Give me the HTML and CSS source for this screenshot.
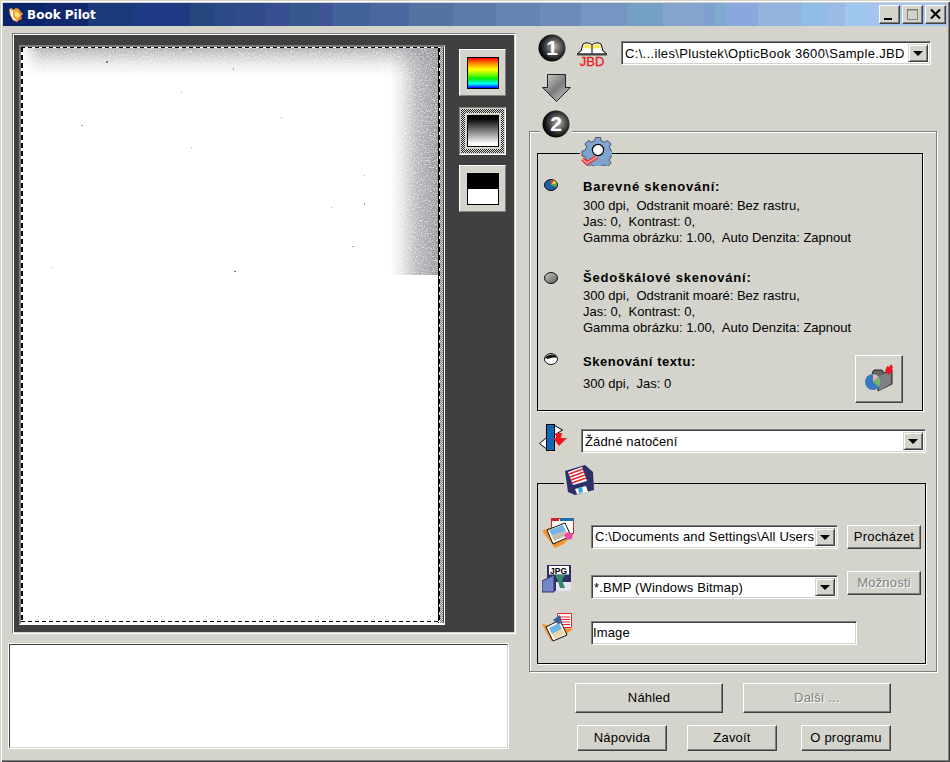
FILE: index.html
```html
<!DOCTYPE html>
<html lang="cs">
<head>
<meta charset="utf-8">
<title>Book Pilot</title>
<link rel="stylesheet" href="styles.css">
</head>
<body>
<div class="window">
  <header class="titlebar">
    <svg class="app-icon" width="18" height="18" viewBox="0 0 18 18"><path d="M2 3l3-1 1 2 3-2 3 1 2 3 2 2-2 2 1 3-3 1-2 2-3-1-2-3-2-3z" fill="#f4a33c"/><path d="M3 4l3 1 0 6 3 3-3 0-2-4z" fill="#fff"/><path d="M8 6l3 0 2 3-2 3-3-2z" fill="#ffe27a"/><path d="M11 4l3 3-1 1zM12 12l3-1-2 3z" fill="#e8551e"/></svg>
    <span class="app-title">Book Pilot</span>
    <div class="caption-btns">
      <button class="caption-btn"><svg width="19" height="17" viewBox="0 0 19 17"><rect x="4" y="12" width="8" height="2" fill="#000"/></svg></button>
      <button class="caption-btn"><svg width="19" height="17" viewBox="0 0 19 17"><path d="M4.5 3.5h10v10h-10z" fill="none" stroke="#808080"/><path d="M4 3h11v1.6H4z" fill="#808080"/></svg></button>
      <button class="caption-btn"><svg width="19" height="17" viewBox="0 0 19 17"><path d="M5 3.5l9 9M14 3.5l-9 9" stroke="#000" stroke-width="2"/></svg></button>
    </div>
  </header>

  <main class="main">
    <section class="left">
      <div class="preview">
        <div class="frame">
          <div class="scan">
            <svg class="scan-shade" width="417" height="228" viewBox="0 0 417 228">
              <defs>
                <linearGradient id="fadeTop" x1="0" y1="0" x2="0" y2="1"><stop offset="0" stop-color="#999" stop-opacity=".8"/><stop offset=".25" stop-color="#999" stop-opacity=".5"/><stop offset=".6" stop-color="#999" stop-opacity=".18"/><stop offset="1" stop-color="#999" stop-opacity="0"/></linearGradient>
                <linearGradient id="fadeRight" x1="0" y1="0" x2="1" y2="0"><stop offset="0" stop-color="#999" stop-opacity="0"/><stop offset=".25" stop-color="#999" stop-opacity=".22"/><stop offset=".55" stop-color="#999" stop-opacity=".65"/><stop offset="1" stop-color="#999" stop-opacity=".95"/></linearGradient>
                <linearGradient id="fadeLeft" x1="0" y1="0" x2="1" y2="0"><stop offset="0" stop-color="#fff"/><stop offset="1" stop-color="#fff" stop-opacity="0"/></linearGradient>
                <filter id="grain" x="0" y="0" width="100%" height="100%" color-interpolation-filters="sRGB">
                  <feTurbulence type="fractalNoise" baseFrequency=".75" numOctaves="2" seed="4" result="t"/>
                  <feColorMatrix in="t" type="matrix" values="0 0 0 0 .58  0 0 0 0 .58  0 0 0 0 .6  1.3 1.3 0 0 -.4" result="g"/>
                  <feComposite in="g" in2="SourceGraphic" operator="in"/>
                </filter>
              </defs>
              <g filter="url(#grain)">
                <rect width="417" height="30" fill="url(#fadeTop)"/>
                <rect x="369" width="48" height="228" fill="url(#fadeRight)"/>
              </g>
              <rect width="20" height="30" fill="url(#fadeLeft)"/>
              <g fill="#aaa">
                <rect x="85" y="14" width="2" height="2" fill="#777"/><rect x="213" y="224" width="2" height="1" fill="#777"/><rect x="160" y="45" width="1" height="1"/><rect x="212" y="21" width="1" height="2"/>
                <rect x="331" y="199" width="2" height="1"/><rect x="343" y="156" width="1" height="2"/><rect x="310" y="160" width="1" height="1"/><rect x="60" y="78" width="2" height="1"/>
                <rect x="30" y="220" width="1" height="1"/><rect x="343" y="128" width="1" height="1"/><rect x="260" y="70" width="1" height="1"/><rect x="170" y="100" width="1" height="1"/>
              </g>
            </svg>
            <div class="selection"></div>
          </div>
          <div class="checker"></div>
        </div>
        <div class="thumbs">
          <button class="thumb"><span class="swatch swatch-color"></span></button>
          <button class="thumb thumb-active"><span class="swatch swatch-gray"></span></button>
          <button class="thumb"><span class="swatch swatch-bw"></span></button>
        </div>
      </div>
      <div class="notes"></div>
    </section>

    <section class="right">
      <div class="step-one">
        <svg class="badge-circle" width="28" height="28" viewBox="0 0 28 28"><defs><radialGradient id="ball1" cx=".58" cy=".45" r=".58"><stop offset="0" stop-color="#b8b8b8"/><stop offset=".45" stop-color="#5a5a5a"/><stop offset=".85" stop-color="#111"/><stop offset="1" stop-color="#000"/></radialGradient></defs><circle cx="14" cy="14" r="13.5" fill="url(#ball1)"/></svg>
        <span class="step-num step-num-one">1</span>
        <div class="book">
          <svg width="32" height="14" viewBox="0 0 32 14"><path d="M1 12l4-3 2-7c4-2 7-1 9 1 2-2 5-3 9-1l2 7 4 3z" fill="#fff" stroke="#000"/><path d="M8 3c3-1 6-1 7 1l0 3c-2-1-5-1-8-1zM17 4c1-2 4-2 7-1l1 3c-3 0-6 0-8 1z" fill="#ffe65c"/><path d="M16 3v9" stroke="#000"/><path d="M1 12.5h30" stroke="#444" stroke-width="2"/></svg>
          <span class="book-label">JBD</span>
        </div>
        <div class="combo combo-path">
          <span class="combo-text">C:\...iles\Plustek\OpticBook 3600\Sample.JBD</span>
          <span class="combo-btn"><i class="tri"></i></span>
        </div>
      </div>

      <svg class="flow-arrow" width="29" height="28" viewBox="0 0 29 28"><defs><linearGradient id="arr" x1="0" y1="0" x2="1" y2="1"><stop offset="0" stop-color="#d8d8d8"/><stop offset=".5" stop-color="#7c7c7c"/><stop offset="1" stop-color="#d8d8d8"/></linearGradient></defs><path d="M5.500.5h18v13h5l-14 14-14-14h5z" fill="url(#arr)" stroke="#222"/></svg>

      <div class="settings">
        <div class="step-two">
          <svg width="28" height="28" viewBox="0 0 28 28"><defs><radialGradient id="ball2" cx=".58" cy=".45" r=".58"><stop offset="0" stop-color="#b8b8b8"/><stop offset=".45" stop-color="#5a5a5a"/><stop offset=".85" stop-color="#111"/><stop offset="1" stop-color="#000"/></radialGradient></defs><circle cx="14" cy="14" r="13.5" fill="url(#ball2)"/></svg>
          <span class="step-num">2</span>
        </div>

        <div class="group group-modes">
          <svg class="legend legend-gear" width="32" height="30" viewBox="0 0 32 30">
            <g transform="translate(18 14)" fill="#7fa5cf" stroke="#2d3a4c" stroke-width=".8">
              <path d="M-2.500-12.500h5l.8 3.300 3.400 1.400 2.900-1.800 3.500 3.500-1.800 2.900 1.400 3.400 3.300.8v5l-3.300.8-1.400 3.400 1.800 2.900-3.500 3.500-2.900-1.800-3.400 1.400-.8 3.300h-5l-.8-3.300-3.400-1.400-2.900 1.800-3.500-3.500 1.800-2.900-1.400-3.400-3.300-.8v-5l3.300-.8 1.400-3.400-1.800-2.900 3.500-3.500 2.900 1.800 3.400-1.400z"/>
              <circle r="5.600" fill="#fff" stroke="#000" stroke-width="1.200"/>
            </g>
            <path d="M2.500 23l4.500 4 10-6" fill="none" stroke="#e83030" stroke-width="4"/>
            <path d="M2.500 23l4.500 4 10-6" fill="none" stroke="#ff9a9a" stroke-width="1.500"/>
          </svg>

          <div class="mode mode-first">
            <svg class="bullet" width="14" height="12" viewBox="0 0 14 12"><ellipse cx="7" cy="6" rx="6.500" ry="5.500" fill="#1f5fa8" stroke="#111"/><path d="M7 6l-1-5 4 .3z" fill="#d8402c"/><path d="M7 6l3-4.700 3 3z" fill="#f4d22c"/><path d="M7 6l6-1.500-.5 3.500z" fill="#5cb848"/></svg>
            <div class="mode-body">
              <h3 class="mode-title">Barevné skenování:</h3>
              <p class="mode-line">300 dpi,&nbsp; Odstranit moaré: Bez rastru,</p>
              <p class="mode-line">Jas: 0,&nbsp; Kontrast: 0,</p>
              <p class="mode-line">Gamma obrázku: 1.00,&nbsp; Auto Denzita: Zapnout</p>
            </div>
          </div>
          <div class="mode mode-second">
            <svg class="bullet" width="14" height="12" viewBox="0 0 14 12"><defs><linearGradient id="bul" x1="0" y1="0" x2="1" y2="1"><stop offset="0" stop-color="#c8c8c8"/><stop offset="1" stop-color="#5c5c5c"/></linearGradient></defs><ellipse cx="7" cy="6" rx="6.500" ry="5.500" fill="url(#bul)" stroke="#111"/></svg>
            <div class="mode-body">
              <h3 class="mode-title">Šedoškálové skenování:</h3>
              <p class="mode-line">300 dpi,&nbsp; Odstranit moaré: Bez rastru,</p>
              <p class="mode-line">Jas: 0,&nbsp; Kontrast: 0,</p>
              <p class="mode-line">Gamma obrázku: 1.00,&nbsp; Auto Denzita: Zapnout</p>
            </div>
          </div>
          <div class="mode mode-third">
            <svg class="bullet" width="14" height="12" viewBox="0 0 14 12"><ellipse cx="7" cy="6" rx="6.500" ry="5.500" fill="#fff" stroke="#111"/><path d="M1 5c2-4 9-5 12-1 0 1-3 0-6 1s-4 1-6 0z" fill="#111"/></svg>
            <div class="mode-body">
              <h3 class="mode-title mode-title-short">Skenování textu:</h3>
              <p class="mode-line mode-line-gap">300 dpi,&nbsp; Jas: 0</p>
            </div>
            <button class="btn btn-folder">
              <svg width="30" height="32" viewBox="0 0 30 32">
                <path d="M8 11l2-3 8 0 2 3 8-3v14l-14 7V14z" fill="#666" stroke="#222"/>
                <path d="M15 14l12-5v13l-12 7z" fill="#7f7f7f"/>
                <circle cx="9" cy="20" r="8" fill="#3b78c0"/>
                <path d="M9 20V12a8 8 0 0 1 6 3z" fill="#d8b79c"/>
                <path d="M9 20l6-5 2 5-2 5z" fill="#7cb26c"/>
                <path d="M21 9l2-5 2 1 2-3 2 3-1 2 1 1-4 5-2-2z" fill="#f01820"/>
              </svg>
            </button>
          </div>
        </div>

        <div class="rotation">
          <svg width="30" height="30" viewBox="0 0 30 30">
            <path d="M7.500 13.500L.5 19.500l7 5.500zM15.500 1.500l8 4.500-8 5z" fill="#fff" stroke="#000"/>
            <rect x="7.500" y=".5" width="8" height="26" fill="#0a6ab8" stroke="#000"/>
            <path d="M17 9h6l-1 5h6l-8 8-6-8h3z" fill="#f01820"/>
          </svg>
          <div class="combo combo-rotation">
            <span class="combo-text">Žádné natočení</span>
            <span class="combo-btn"><i class="tri"></i></span>
          </div>
        </div>

        <div class="group group-save">
          <svg class="legend legend-floppy" width="30" height="32" viewBox="0 0 30 32">
            <path d="M1 7l20-6 8 7 1 18-19 5-7-3z" fill="#2f2f68"/>
            <path d="M4 8l14-5 5 14-14 4z" fill="#fff"/>
            <path d="M5 10l14-5M6 13l14-5M7 16l14-5M8 19l14-5" stroke="#e8262c" stroke-width="1.500"/>
            <path d="M11 25l11-3 2 6-11 2z" fill="#fff"/><path d="M14 24l4-1 1 5-4 1z" fill="#2aa8e8"/>
          </svg>

          <div class="save-row save-row-one">
            <svg width="33" height="30" viewBox="0 0 33 30">
              <path d="M9.500.5h22v15h-22z" fill="#fff" stroke="#d0202c"/><path d="M9 0h8v3H9z" fill="#d0202c"/><path d="M18 0h14v3H18z" fill="#1e6ea8"/>
              <path d="M0 13l9-4 20 9-7 8-9 4z" fill="#f39432"/>
              <path d="M5 12l18-7 6 13-18 8z" fill="#fff" stroke="#111"/>
              <path d="M7 12l14-5 3 6-14 5z" fill="#78b4e8"/><path d="M10 18l14-5 2 4-14 6z" fill="#c8bca8"/>
              <path d="M22 17l4-3 5 2-1 5-5 1z" fill="#ec4aa0"/>
            </svg>
            <div class="combo combo-folder">
              <span class="combo-text">C:\Documents and Settings\All Users</span>
              <span class="combo-btn"><i class="tri"></i></span>
            </div>
            <button class="btn btn-side">Procházet</button>
          </div>

          <div class="save-row save-row-two">
            <svg class="icon-jpg" width="33" height="28" viewBox="0 0 33 28">
              <path d="M5 0h24v26H5z" fill="#2f2f68"/><path d="M7 1h20v8.500H7z" fill="#fff"/>
              <text x="8" y="8.500" class="jpg-label">JPG</text>
              <path d="M14 17h15v9H14z" fill="#e4e4ee"/><path d="M13 10h10l-3 5 3 8h-5l-2-7z" fill="#2e8c68"/>
              <path d="M0 16l12-6v17H0z" fill="#7488c8" stroke="#2f2f68"/>
            </svg>
            <div class="combo combo-format">
              <span class="combo-text">*.BMP (Windows Bitmap)</span>
              <span class="combo-btn"><i class="tri"></i></span>
            </div>
            <button class="btn btn-side btn-options" disabled>Možnosti</button>
          </div>

          <div class="save-row save-row-three">
            <svg width="33" height="30" viewBox="0 0 33 30">
              <path d="M15.500.5h14v14h-14z" fill="#fff" stroke="#e8262c"/><path d="M17 4h11M17 6.500h11M17 9h11M17 11.500h11" stroke="#e8262c"/>
              <path d="M0 11l9 17 10-3 12-9-14-2z" fill="#f39432"/>
              <path d="M4 14l14-7 7 15-14 6z" fill="#fff" stroke="#111"/>
              <path d="M7 15l10-5 3 6-10 5z" fill="#6eb4e4"/><path d="M10 21l10-5 3 5-10 5z" fill="#e8d8a8"/>
              <path d="M11 7l7-5 2 8-4 1z" fill="#3c5c94"/>
            </svg>
            <input class="field" type="text" value="Image">
          </div>
        </div>
      </div>

      <div class="actions actions-main">
        <button class="btn btn-large">Náhled</button>
        <button class="btn btn-large" disabled>Další ...</button>
      </div>
      <div class="actions actions-secondary">
        <button class="btn btn-small">Nápovida</button>
        <button class="btn btn-small">Zavoít</button>
        <button class="btn btn-small btn-about">O programu</button>
      </div>
    </section>
  </main>
</div>
</body>
</html>
```

FILE: styles.css
```css
* { box-sizing: border-box; }

html, body { margin: 0; padding: 0; }

body {
  width: 950px;
  height: 762px;
  overflow: hidden;
  font-family: "Liberation Sans", Arial, sans-serif;
  font-size: 13px;
  color: #000;
  background: #d4d4cc;
}

.window {
  width: 950px;
  height: 762px;
  background: #d4d4cc;
  box-shadow: inset 1px 1px 0 #d4d4cc, inset 2px 2px 0 #fff, inset -1px -1px 0 #404040, inset -2px -2px 0 #808080;
  padding-top: 3px;
}

.titlebar {
  height: 23px;
  margin: 0 3px;
  display: flex;
  align-items: center;
  padding: 0 1px 0 4px;
  background: linear-gradient(90deg,
    #0a246a 0 42px, #12296f 42px 85px, #1a3a7a 85px 130px, #1f3a85 130px 187px,
    #26467f 187px 212px, #2a4a88 212px 232px, #304a8a 232px 262px, #374f90 262px 287px,
    #37578f 287px 315px, #405597 315px 330px, #41629a 330px 367px, #4968a0 367px 406px,
    #5374a3 406px 450px, #5c7aaa 450px 493px, #6484b3 493px 537px, #6d8abb 537px 578px,
    #7695c3 578px 624px, #74a0c4 624px 660px, #85a3cc 660px 700px, #7e9fd2 700px 712px,
    #7faad0 712px 723px, #88a8de 723px 755px, #93b4de 755px 799px, #90bde6 799px 824px,
    #9bbbe6 824px 842px, #9ec6ee 842px 865px, #a5c5f0 865px);
}

.app-icon { flex: none; }

.app-title {
  margin-left: 2px;
  color: #fff;
  font-family: "DejaVu Sans", sans-serif;
  font-size: 12px;
  font-weight: bold;
}

.caption-btns {
  margin-left: auto;
  display: flex;
  gap: 2px;
}

.caption-btn {
  width: 21px;
  height: 19px;
  padding: 0;
  background: #d4d4cc;
  border: 1px solid;
  border-color: #fff #404040 #404040 #fff;
  box-shadow: inset -1px -1px 0 #808080;
  display: flex;
}

.main {
  display: flex;
  gap: 12px;
  padding: 7px 0 0 9px;
}

.left { width: 508px; flex: none; }

.preview {
  width: 504px;
  height: 601px;
  margin-left: 3px;
  background: #404040;
  border: 1px solid;
  border-color: #808080 #fff #fff #808080;
  box-shadow: inset 1px 1px 0 #fff, inset -1px -1px 0 #d4d4cc;
  padding: 11px 0 0 6px;
  display: flex;
  align-items: flex-start;
  gap: 14px;
}

.frame {
  width: 426px;
  height: 580px;
  display: flex;
  border-style: solid;
  border-width: 2px 1px 2px 2px;
  border-color: #808080 #fff #fff #808080;
}

.scan {
  position: relative;
  width: 419px;
  height: 576px;
  background: #fff;
}

.scan-shade { display: block; }

.selection {
  position: absolute;
  inset: 0;
  background:
    repeating-linear-gradient(90deg, #000 0 4px, #fff 4px 7px) 0 0 / 100% 1px no-repeat,
    repeating-linear-gradient(90deg, #000 0 4px, #fff 4px 7px) 0 574px / 100% 1px no-repeat,
    repeating-linear-gradient(180deg, #000 0 5px, #fff 5px 8px) 0 0 / 2px 100% no-repeat,
    linear-gradient(#000, #000) 417px 0 / 1px 100% no-repeat,
    repeating-linear-gradient(180deg, #000 0 5px, #fff 5px 8px) 418px 0 / 1px 100% no-repeat;
}

.checker {
  width: 3px;
  height: 576px;
  background: repeating-conic-gradient(#777 0 25%, #ddd 0 50%) 0 0 / 2px 2px;
}

.thumbs {
  display: flex;
  flex-direction: column;
  gap: 11px;
  margin-top: 4px;
}

.thumb {
  width: 47px;
  height: 47px;
  padding: 0;
  display: flex;
  align-items: center;
  justify-content: center;
  background: #d4d4cc;
  border: 1px solid;
  border-color: #fff #808080 #808080 #fff;
}

.thumb-active {
  height: 48px;
  margin-bottom: -1px;
  background: repeating-conic-gradient(#222 0 25%, #e4e4dc 0 50%) 0 0 / 2px 2px;
  border-color: #808080 #fff #fff #808080;
  box-shadow: inset 0 0 0 1px #d4d4cc;
}

.thumb-active .swatch { box-shadow: 0 0 0 2px #d4d4cc; }

.swatch {
  display: block;
  width: 32px;
  height: 32px;
  border: 1px solid #000;
}

.swatch-color {
  background: linear-gradient(180deg, #f00 0%, #ff7a00 16%, #ff0 38%, #9f0 52%, #0e0 68%, #0ff 86%, #00f 100%);
}

.swatch-gray { background: linear-gradient(180deg, #000 8%, #fff 92%); }

.swatch-bw { background: linear-gradient(180deg, #000 0 50%, #fff 50%); }

.notes {
  width: 499px;
  height: 104px;
  margin-top: 10px;
  background: #fff;
  border: 1px solid;
  border-color: #404040 #d4d4cc #d4d4cc #404040;
  outline: 1px solid #fff;
}

.right {
  width: 408px;
  flex: none;
}

.step-one {
  position: relative;
  height: 33px;
  padding: 1px 0 0 9px;
  display: flex;
  align-items: flex-start;
}

.badge-circle { flex: none; }

.step-num {
  position: absolute;
  left: 2px;
  top: 0;
  width: 28px;
  height: 28px;
  color: #fff;
  font-weight: bold;
  font-size: 21px;
  line-height: 28px;
  text-align: center;
}

.step-num-one { left: 9px; top: 1px; }

.book {
  width: 32px;
  margin: 8px 0 0 10px;
  display: flex;
  flex-direction: column;
  align-items: center;
}

.book svg { display: block; }

.book-label {
  color: #f01820;
  font-size: 13px;
  line-height: 11px;
  -webkit-text-stroke: .3px #f01820;
}

.combo {
  position: relative;
  display: flex;
  align-items: center;
  height: 24px;
  background: #fff;
  border: 1px solid;
  border-color: #808080 #fff #fff #808080;
  box-shadow: inset 1px 1px 0 #404040, inset -1px -1px 0 #d4d4cc;
  padding: 0 2px 0 3px;
  overflow: hidden;
  letter-spacing: .15px;
}

.combo-path {
  width: 310px;
  margin: 7px 0 0 13px;
  padding-left: 3px;
  letter-spacing: .33px;
}

.combo-format { padding-left: 2px; }

.combo-text {
  flex: 1;
  min-width: 0;
  overflow: hidden;
  white-space: nowrap;
}

.combo-btn {
  flex: none;
  width: 20px;
  height: 18px;
  display: flex;
  align-items: center;
  justify-content: center;
  background: #d4d4cc;
  border: 1px solid;
  border-color: #d4d4cc #404040 #404040 #d4d4cc;
  box-shadow: inset 1px 1px 0 #fff, inset -1px -1px 0 #808080;
}

.tri {
  display: block;
  width: 0;
  height: 0;
  border-style: solid;
  border-width: 5px 5px 0;
  border-color: #000 transparent transparent;
}

.flow-arrow {
  display: block;
  margin: 8px 0 29px 13px;
}

.settings {
  position: relative;
  width: 408px;
  height: 541px;
  border: 1px solid #808080;
  box-shadow: inset 1px 1px 0 #fff, 1px 1px 0 #fff;
  padding: 21px 0 0 7px;
}

.step-two {
  position: absolute;
  left: 10px;
  top: -22px;
  width: 32px;
  height: 30px;
  padding-left: 2px;
  background: linear-gradient(#d4d4cc, #d4d4cc) 0 21px / 100% 3px no-repeat;
}

.step-two svg { display: block; }

.group {
  position: relative;
  border: 1px solid #000;
  box-shadow: 1px 1px 0 #fff;
}

.group-modes {
  width: 386px;
  height: 258px;
  padding: 25px 0 0 6px;
}

.legend {
  position: absolute;
  display: block;
}

.legend-gear {
  left: 42px;
  top: -18px;
  background: linear-gradient(#d4d4cc, #d4d4cc) 0 16px / 100% 3px no-repeat;
}

.legend-floppy {
  left: 26px;
  top: -20px;
  background: linear-gradient(#d4d4cc, #d4d4cc) 0 18px / 100% 3px no-repeat;
}

.mode {
  display: flex;
  align-items: flex-start;
  gap: 25px;
}

.mode-second { margin-top: 24px; }

.mode-third { margin-top: 18px; }

.bullet { flex: none; }

.mode-second .bullet { margin-top: 2px; }

.mode-third .bullet { margin-top: -1px; }

.mode-body { flex: none; }

.mode-title {
  margin: 0 0 2px;
  font-size: 13px;
  font-weight: bold;
  line-height: 16px;
  letter-spacing: .8px;
}

.mode-first .mode-title { margin-bottom: 3px; }

.mode-title-short { letter-spacing: .55px; }

.mode-line {
  margin: 0;
  font-size: 13px;
  line-height: 16px;
}

.mode-line-gap { margin-top: 6px; }

.btn {
  padding: 0 0 2px;
  background: #d4d4cc;
  font-family: inherit;
  font-size: 13px;
  letter-spacing: .2px;
  color: #000;
  border: 1px solid;
  border-color: #fff #404040 #404040 #fff;
  box-shadow: inset -1px -1px 0 #808080;
}

.btn:disabled {
  color: #808080;
  text-shadow: 1px 1px 0 #fff;
}

.btn-folder {
  width: 48px;
  height: 48px;
  margin: 1px 19px 0 auto;
  display: flex;
  align-items: center;
  justify-content: center;
}

.rotation {
  display: flex;
  align-items: flex-start;
  gap: 12px;
  margin: 13px 0 29px 2px;
  height: 30px;
}

.rotation svg { flex: none; }

.combo-rotation {
  width: 345px;
  margin-top: 5px;
}

.group-save {
  width: 389px;
  height: 181px;
  padding: 34px 0 0 4px;
}

.save-row {
  display: flex;
  align-items: flex-start;
}

.save-row > svg { flex: none; margin-right: 16px; }

.save-row-one { height: 47px; }

.save-row-two { height: 48px; }

.combo-folder {
  width: 247px;
  margin-top: 7px;
  margin-right: 9px;
}

.combo-folder .combo-text { padding-bottom: 2px; }

.combo-format {
  width: 247px;
  margin-top: 10px;
  margin-right: 9px;
}

.btn-side {
  width: 74px;
  height: 24px;
  margin-top: 7px;
}

.btn-options { margin-top: 6px; }

.save-row-three .field { margin-top: 8px; }

.field {
  width: 266px;
  height: 24px;
  padding: 0 0 2px 1px;
  background: #fff;
  font-family: inherit;
  font-size: 13px;
  letter-spacing: .15px;
  color: #000;
  border: 1px solid;
  border-color: #808080 #fff #fff #808080;
  box-shadow: inset 1px 1px 0 #404040, inset -1px -1px 0 #d4d4cc;
  outline: none;
}

.jpg-label {
  font-family: "Liberation Sans", sans-serif;
  font-size: 8.500px;
  font-weight: bold;
  fill: #000;
}

.actions { display: flex; }

.actions-main {
  margin: 11px 0 0 46px;
  gap: 20px;
}

.actions-secondary {
  margin: 12px 0 0 48px;
  gap: 20px;
}

.btn-large { width: 148px; height: 30px; }

.btn-small { width: 90px; height: 26px; }

.btn-about { margin-left: 4px; }
```
